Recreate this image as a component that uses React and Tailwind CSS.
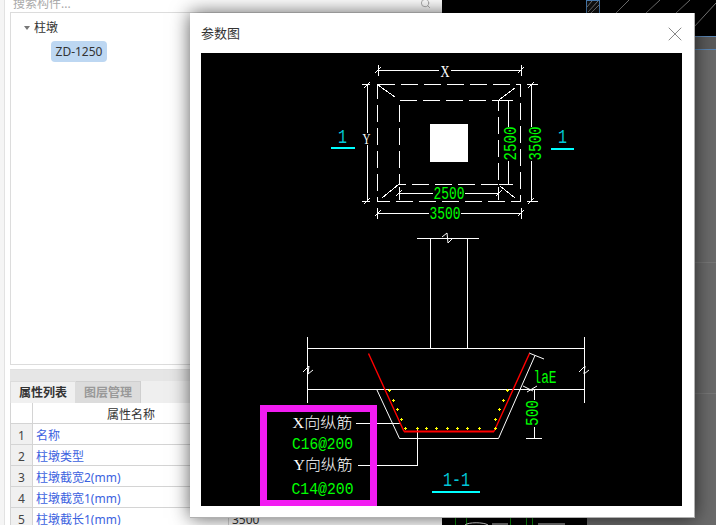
import { Search, X } from 'lucide-react';

const rows = [
    { no: 1, name: '名称', value: '' },
    { no: 2, name: '柱墩类型', value: '' },
    { no: 3, name: '柱墩截宽2(mm)', value: '' },
    { no: 4, name: '柱墩截宽1(mm)', value: '' },
    { no: 5, name: '柱墩截长1(mm)', value: '3500' },
];

const plusDots = [
    [389, 390], [393, 400], [397, 409], [401, 419], [405, 428], [417, 428], [426, 428], [436, 428],
    [447, 428], [457, 428], [467, 428], [479, 428], [495, 428], [495, 419], [499, 409], [503, 400], [507, 390],
];

function Line({ d, color = '#fff', width = 1, dash }) {
    return <path d={d} fill="none" stroke={color} strokeWidth={width} strokeDasharray={dash} />;
}

// CAD lettering: tall narrow text, squeezed to the width measured on the drawing
function Cad({ x, y, w, children, color = '#00ff00', size = 18, rotate, serif }) {
    return (
        <text
            x={x}
            y={y}
            textAnchor="middle"
            dominantBaseline="central"
            fill={color}
            fontSize={size}
            fontWeight={300}
            fontFamily={serif ? "'Liberation Serif','Noto Sans CJK SC',serif" : undefined}
            textLength={w}
            lengthAdjust="spacingAndGlyphs"
            transform={rotate ? `rotate(${rotate} ${x} ${y})` : undefined}
        >
            {children}
        </text>
    );
}

function Tick({ x, y }) {
    return <Line d={`M${x - 3} ${y + 3}L${x + 3} ${y - 3}`} />;
}

function PlanView() {
    return (
        <g shapeRendering="crispEdges">
            <Line d="M378 65V76M521 65V76M378 70.5H439M451 70.5H521" />
            <Tick x={378} y={70} />
            <Tick x={521} y={70} />
            <Cad x={445} y={71} w={9} color="#fff" size={16} serif>X</Cad>

            <Line d="M377.5 84.5H520.5V201.5H377.5Z" dash="17 6" />
            <Line d="M399.5 100.5H498.5V184.5H399.5Z" dash="17 6" />
            <Line d="M378 85L395 97M515 88L499 100M382 198L399 184M500 186L515 198" />
            <rect x={430} y={124} width={38} height={38} fill="#fff" />

            <Line d="M362 84.5H370M362 201.5H370M367.5 84V133M367.5 145V201" />
            <Tick x={367} y={85} />
            <Tick x={367} y={201} />
            <Cad x={366.5} y={139} w={8} color="#fff" size={15} serif>Y</Cad>

            <Line d="M527 84.5H538M527 201.5H538M531.5 84V127M531.5 161V201" />
            <Tick x={531} y={85} />
            <Tick x={531} y={201} />
            <Cad x={535.5} y={143.5} w={34} rotate={-90}>3500</Cad>

            <Line d="M499 100.5H513M499 184.5H513M508.5 100V127M508.5 161V184" />
            <Cad x={510.5} y={143.5} w={34} rotate={-90}>2500</Cad>

            <Line d="M399.5 193.5H433M465 193.5H498.5M399.5 187V200M498.5 187V200" />
            <Tick x={399} y={193} />
            <Tick x={499} y={193} />
            <Cad x={449} y={194} w={31}>2500</Cad>

            <Line d="M377.5 213.5H429M461 213.5H521M377.5 208V219M521 208V219" />
            <Tick x={378} y={213} />
            <Tick x={521} y={213} />
            <Cad x={445} y={214} w={31}>3500</Cad>

            <Cad x={342.5} y={137} w={9} color="#00c8d8" size={21}>1</Cad>
            <rect x={331} y={147} width={24} height={2} fill="#00ffff" />
            <Cad x={562.5} y={137} w={9} color="#00c8d8" size={21}>1</Cad>
            <rect x={551} y={148} width={23} height={2} fill="#00ffff" />
        </g>
    );
}

function SectionView() {
    return (
        <g>
            <g shapeRendering="crispEdges">
                <Line d="M417 238.5H479M430.5 238.5V348M467.5 238.5V348" />
                <Line d="M307 348.5H584.5M307 389.5H584.5M307.5 337V403M584.5 337V403" />
                <Line d="M356 423.5H401M358 465.5H417.5V428" />
                <Line d="M526 438.5H542M526 389.5H542M534.5 389V400M534.5 427V438" />
            </g>
            <Line d="M442 237L447 233L448 243L453 238" />
            <Line d="M303 372L309 366L308 374L313 370M579 372L585 366L584 374L589 370" />
            <Line d="M376.5 389L399.5 438.5H498.5L535 355.5M529 353L544 359" />
            <Line d="M523 386L533 391M527 392L537 386" />
            <Line d="M368.5 353.5L404 431.5M529.5 353.5L494 431.5" color="#ff0000" width={1.4} />
            <rect x={404} y={430.5} width={90} height={2} fill="#ff0000" />
            {plusDots.map(([x, y]) => (
                <path key={`${x}-${y}`} d={`M${x - 1.5} ${y + 0.5}H${x + 1.5}M${x} ${y - 1}V${y + 2}`} stroke="#ffff00" fill="none" shapeRendering="crispEdges" />
            ))}
            <Cad x={545} y={378} w={23} size={18}>laE</Cad>
            <Cad x={533} y={413} w={26} rotate={-90}>500</Cad>
            <Cad x={456.5} y={480} w={27} color="#00c8d8" size={20}>1-1</Cad>
            <rect x={432} y={491} width={48} height={2} fill="#00ffff" />

            <rect x={263.5} y={408.5} width={110} height={95} fill="none" stroke="#f21cf2" strokeWidth={7} shapeRendering="crispEdges" />
            <Cad x={322.5} y={423} w={60} color="#fff" size={15} serif>X向纵筋</Cad>
            <Cad x={322.5} y={444} w={61} size={17}>C16@200</Cad>
            <Cad x={323} y={465} w={59} color="#fff" size={15} serif>Y向纵筋</Cad>
            <Cad x={322.5} y={489} w={62} size={17}>C14@200</Cad>
        </g>
    );
}

function ParamDialog() {
    return (
        <div className="absolute left-[190px] top-[13px] flex h-[505px] w-[505px] flex-col border-r border-b border-[#b0b0b0] bg-white shadow-[0_0_18px_rgba(0,0,0,0.65)]">
            <div className="flex h-[40px] items-center justify-between pl-[11px] pr-[7px] pt-[1px]">
                <span className="text-[13px] text-[#333]">参数图</span>
                <X size={24} strokeWidth={1} className="text-[#888]" />
            </div>
            <div className="mx-[11px] h-[453px] w-[481px] bg-black">
                <svg viewBox="201 53 481 453" className="block h-full w-full font-['Liberation_Mono','Noto_Sans_CJK_SC',monospace]">
                    <PlanView />
                    <SectionView />
                </svg>
            </div>
        </div>
    );
}

function LeftPanel() {
    return (
        <div className="flex h-full w-[442px] shrink-0 overflow-hidden bg-white">
            <div className="w-[5px] shrink-0 border-r border-[#e2e2e2] bg-[#f5f5f5]" />
            <div className="flex min-w-0 flex-1 flex-col pl-[5px]">
                <div className="flex h-[13px] shrink-0 items-end justify-between overflow-hidden border-b border-[#dcdcdc] pl-[3px] pr-[11px]">
                    <span className="text-[12px] leading-[17px] text-[#aaa]">搜索构件...</span>
                    <Search size={11} className="mb-[3px] text-[#aaa]" />
                </div>
                <div className="h-[352px] shrink-0 border-b border-l border-[#dcdcdc]">
                    <div className="flex h-[28px] items-center pl-[13px] pt-[2px]">
                        <span className="h-0 w-0 border-x-[3px] border-t-[4px] border-x-transparent border-t-[#777]" />
                        <span className="ml-[4px] text-[12px] text-[#333]">柱墩</span>
                    </div>
                    <div className="pl-[40px]">
                        <span className="flex h-[21px] w-[56px] items-center justify-center rounded-[4px] bg-[#bdd7f2] text-[12px] text-[#333]">ZD-1250</span>
                    </div>
                </div>
                <div className="mt-[4px] h-[12px] shrink-0 border-t border-[#e0e0e0] bg-[#e6e6e6]" />
                <div className="flex h-[22px] shrink-0 border-l border-[#dcdcdc] bg-[#efefef]">
                    <span className="flex w-[65px] items-center justify-center border-r border-t border-[#dcdcdc] bg-[#f0f0f0] text-[12px] font-bold text-[#333]">属性列表</span>
                    <span className="flex w-[65px] items-center justify-center border-r border-t border-[#cfcfcf] bg-[#dcdcdc] text-[12px] font-bold text-[#999]">图层管理</span>
                </div>
                <div className="flex h-[21px] shrink-0 border-b border-l border-[#d4d4d4]">
                    <span className="w-[22px] border-r border-[#d4d4d4]" />
                    <span className="flex w-[196px] items-center pl-[74px] pt-[4px] text-[12px] text-[#333]">属性名称</span>
                </div>
                {rows.map((row) => (
                    <div key={row.no} className="flex h-[21px] shrink-0 border-b border-l border-[#d4d4d4] text-[12px]">
                        <span className="flex w-[22px] items-center justify-center border-r border-[#d4d4d4] bg-[#f0f0f0] pt-[3px] text-[#444]">{row.no}</span>
                        <span className="flex w-[196px] items-center border-r border-[#d4d4d4] pl-[3px] pt-[3px] text-[#3c62e0]">{row.name}</span>
                        <span className="flex flex-1 items-center pl-[3px] pt-[3px] text-[#333]">{row.value}</span>
                    </div>
                ))}
            </div>
        </div>
    );
}

function CadArea() {
    return (
        <div className="flex h-full min-w-0 flex-1 flex-col">
            <svg viewBox="442 0 274 36" className="block h-[36px] w-[274px] shrink-0 bg-black">
                <Line d="M616 13L629 0M646 13L660 0M676 13L690 0M694 27L716 3" color="#777" />
                <rect x={586.5} y={0.5} width={13} height={13} fill="#111" stroke="#4a7fb5" />
                <Line d="M588 12L598 1M591 13L599 5M587 7L592 1" color="#777" />
            </svg>
            <div className="flex min-h-0 flex-1">
                <svg viewBox="442 36 145 489" className="block h-full w-[145px] shrink-0 bg-black">
                    <Line d="M455.5 515V525M466.5 515V525M510.5 515V525M526.5 515V525M532.5 515V525" color="#0a8a0a" />
                    <Line d="M465 525C468 522 484 522 488 525M492 524H508M538 524H565" color="#ddd" />
                </svg>
                <div className="flex min-w-0 flex-1 flex-col bg-[#6a6a6a]">
                    <div className="h-[14px] shrink-0 border-y border-[#5b86b4] bg-[#5a5a5a]" />
                    <div className="mt-[212px] h-px shrink-0 bg-[#777]" />
                    <div className="mt-[130px] h-px shrink-0 bg-[#777]" />
                </div>
            </div>
        </div>
    );
}

export default function App() {
    return (
        <div className="relative flex h-[525px] w-[716px] overflow-hidden font-['Noto_Sans','Noto_Sans_CJK_SC',sans-serif]">
            <LeftPanel />
            <CadArea />
            <ParamDialog />
        </div>
    );
}
